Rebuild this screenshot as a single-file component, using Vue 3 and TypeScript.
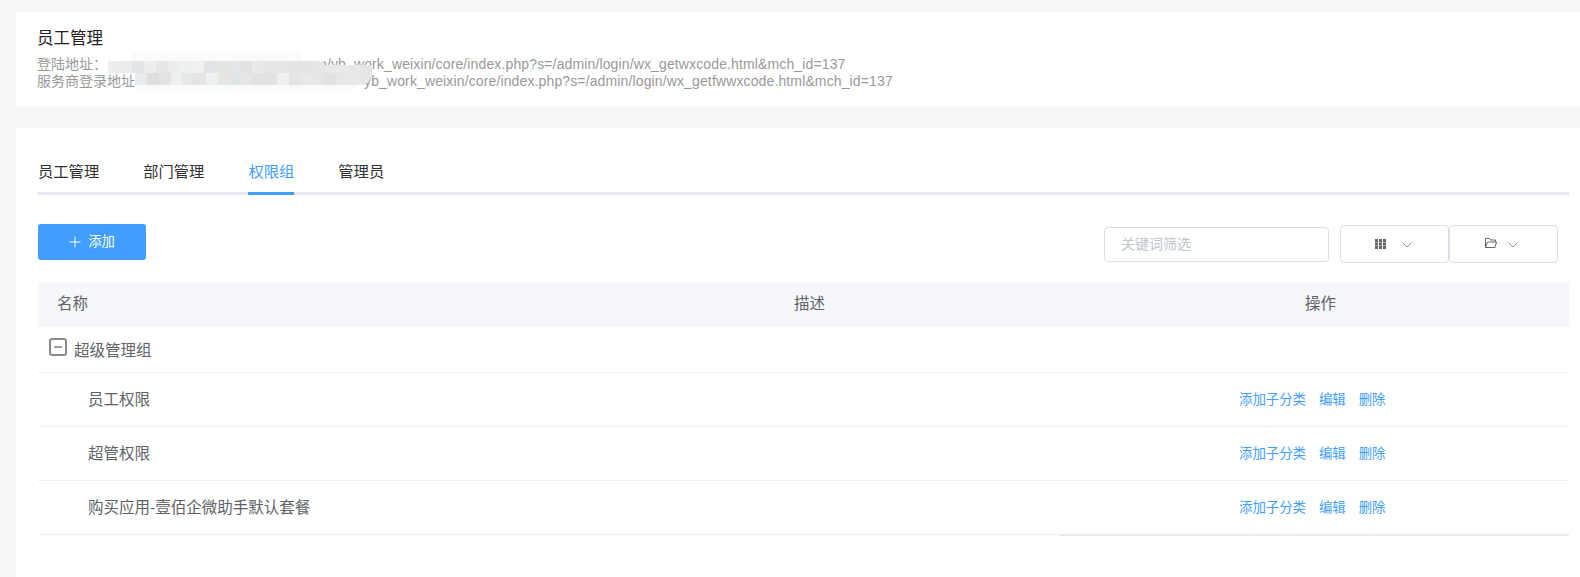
<script setup lang="ts">
const tabs = ['员工管理', '部门管理', '权限组', '管理员']
const rows = ['员工权限', '超管权限', '购买应用-壹佰企微助手默认套餐']
const rowOne = ['#ededed', '#ececec', '#e3e5e5', '#eeedeb', '#e6e6e8', '#ecebed', '#eeeff0', '#f0f0ee', '#e1e3e6', '#e4e4e4', '#e3e5e8', '#e4e2e0', '#e8eaea', '#e8e6e4', '#e6e4e4', '#e4e4e4', '#e2e4e4', '#e6e6e6', '#e8e8e8', '#e9e9eb', '#e8e8e8', '#e6e6e6']
const rowTwo = ['#e8ecee', '#e0dedc', '#e4e4e2', '#ecf0f0', '#e6e6e4', '#e4e4e2', '#ecf0ee', '#e8e4e2', '#e0e6e8', '#e6e6e6', '#e2e2e2', '#e2e2e2', '#f0f0ee', '#e4e4e4', '#e8e8e8', '#e6e6e6', '#e2e2e0', '#e6e6e6', '#e8e8e8', '#e6e6e6']
</script>

<template>
  <div class="page">
    <section class="card head">
      <h1 class="title">员工管理</h1>
      <div class="urls">
        <p class="url"><span>登陆地址：</span><span class="gap1"></span><span class="latin">o/yb_work_weixin/core/index.php?s=/admin/login/wx_getwxcode.html&amp;mch_id=137</span></p>
        <p class="url"><span>服务商登录地址</span><span class="gap2"></span><span class="latin">yb_work_weixin/core/index.php?s=/admin/login/wx_getfwwxcode.html&amp;mch_id=137</span></p>
      </div>
      <div class="mosaic">
        <div class="faint top"></div>
        <div class="m-row one">
          <i v-for="(c, i) in rowOne" :key="i" :class="{ low: i >= 18 }" :style="{ background: c }"></i>
        </div>
        <div class="m-row two">
          <i v-for="(c, i) in rowTwo" :key="i" :style="{ background: c }"></i>
        </div>
        <div class="faint bottom"></div>
      </div>
    </section>

    <section class="card main">
      <nav class="tabs">
        <a v-for="(t, i) in tabs" :key="t" class="tab" :class="{ active: i === 2 }">{{ t }}</a>
      </nav>

      <div class="toolbar">
        <button class="add">
          <svg width="12" height="12" viewBox="0 0 12 12"><path d="M6 0.5V11.5M0.5 6H11.5" stroke="#fff" stroke-width="1" fill="none" /></svg>
          <span class="add-label">添加</span>
        </button>
        <div class="tools">
          <input class="search" placeholder="关键词筛选" />
          <div class="selects">
            <div class="select">
              <svg width="11" height="10" viewBox="0 0 11 10"><path fill="#666" d="M0 0h3v3H0zM4 0h3v3H4zM8 0h3v3H8zM0 3.5h3v3H0zM4 3.5h3v3H4zM8 3.5h3v3H8zM0 7h3v3H0zM4 7h3v3H4zM8 7h3v3H8z" /></svg>
              <svg class="chev" width="10" height="6" viewBox="0 0 10 6"><path d="M0.5 0.5L5 5L9.5 0.5" stroke="#909399" fill="none" /></svg>
            </div>
            <div class="select narrow">
              <svg class="folder" width="12" height="10" viewBox="0 0 12 10"><path d="M0.5 9.5V0.5H4.5L5.5 2H10.5V4M0.5 9.5H10L11.5 4H2.5L0.5 9.5" stroke="#666" fill="none" /></svg>
              <svg class="chev" width="10" height="6" viewBox="0 0 10 6"><path d="M0.5 0.5L5 5L9.5 0.5" stroke="#909399" fill="none" /></svg>
            </div>
          </div>
        </div>
      </div>

      <div class="table">
        <div class="row thead">
          <div class="c-name">名称</div>
          <div class="c-desc">描述</div>
          <div class="c-op">操作</div>
        </div>
        <div class="row group">
          <div class="c-name">
            <span class="toggle"><b></b></span>
            <span>超级管理组</span>
          </div>
        </div>
        <div v-for="r in rows" :key="r" class="row child">
          <div class="c-name">{{ r }}</div>
          <div class="c-desc"></div>
          <div class="links">
            <a>添加子分类</a>
            <a>编辑</a>
            <a>删除</a>
          </div>
        </div>
        <div class="edge"></div>
      </div>
    </section>
  </div>
</template>

<style>
html, body {
  margin: 0;
  background: #f6f7f9;
}
</style>

<style scoped>
.page {
  height: 577px;
  overflow: hidden;
  padding: 12px 0 0 16px;
  box-sizing: border-box;
  font-family: "Liberation Sans", "Noto Sans CJK SC", sans-serif;
  display: flex;
  flex-direction: column;
  gap: 22px;
}
.card {
  background: #fff;
}
.head {
  position: relative;
  height: 94px;
  padding: 16px 21px 0;
  box-sizing: border-box;
}
.title {
  margin: 0;
  font-size: 16.5px;
  font-weight: 400;
  line-height: 20px;
  color: #222;
}
.urls {
  margin-top: 8px;
}
.url {
  margin: 0;
  font-size: 14px;
  line-height: 17px;
  color: #999;
  white-space: nowrap;
}
.latin {
  letter-spacing: 0.13px;
}
.gap1 {
  display: inline-block;
  width: 212px;
}
.gap2 {
  display: inline-block;
  width: 229px;
}
.mosaic {
  position: absolute;
  left: 92px;
  top: 40px;
  width: 264px;
}
.faint {
  height: 9px;
  margin-left: 24px;
  width: 170px;
  background: #fafafa;
}
.faint.bottom {
  height: 6px;
  margin-left: 28px;
  width: 220px;
  border-radius: 0 0 20px 20px;
}
.m-row {
  display: flex;
  height: 12px;
}
.m-row i {
  display: block;
  width: 12px;
  height: 12px;
}
.m-row i.low {
  height: 8px;
  margin-top: 4px;
}
.m-row.two {
  margin-left: 27px;
  width: 237px;
  overflow: hidden;
  border-radius: 0 0 12px 0;
}
.main {
  flex: 1;
  padding: 33px 11px 0 22px;
}
.tabs {
  display: flex;
  gap: 44px;
  border-bottom: 3px solid #e4e7ed;
  height: 31px;
}
.tab {
  position: relative;
  font-size: 15.3px;
  line-height: 22px;
  color: #303133;
}
.tab.active {
  color: #409eff;
}
.tab.active::after {
  content: "";
  position: absolute;
  left: 0;
  right: 0;
  bottom: -3px;
  height: 3px;
  background: #409eff;
}
.toolbar {
  display: flex;
  justify-content: space-between;
  align-items: flex-start;
  margin-top: 29px;
  padding-right: 11px;
}
.add {
  width: 108px;
  height: 36px;
  border: 0;
  border-radius: 3px;
  background: #409eff;
  color: #fff;
  font: inherit;
  font-size: 13.3px;
  display: flex;
  align-items: center;
  justify-content: center;
  gap: 7px;
  padding: 0;
}
.add-label {
  margin-top: -3px;
}
.tools {
  display: flex;
  align-items: center;
  gap: 11px;
  margin-top: 1px;
}
.search {
  width: 225px;
  height: 35px;
  box-sizing: border-box;
  border: 1px solid #dcdfe6;
  border-radius: 4px;
  padding: 0 16px;
  font: inherit;
  font-size: 14px;
  outline: none;
}
.search::placeholder {
  color: #c0c4cc;
}
.selects {
  display: flex;
}
.select {
  width: 109px;
  height: 38px;
  box-sizing: border-box;
  border: 1px solid #dcdfe6;
  border-radius: 4px;
  display: flex;
  align-items: center;
  justify-content: center;
  gap: 16px;
  padding-right: 3px;
}
.select.narrow {
  gap: 11px;
  padding-right: 4px;
}
.chev {
  margin-top: 1px;
}
.folder {
  margin-top: -3px;
}
.table {
  position: relative;
  margin-top: 19px;
  font-size: 15.5px;
  color: #606266;
}
.row {
  display: grid;
  grid-template-columns: 737px 464px 1fr;
  align-items: center;
  border-bottom: 1px solid #ebeef5;
  box-sizing: border-box;
}
.thead {
  height: 44px;
  padding-bottom: 4px;
  background: #f5f7fa;
}
.thead .c-name {
  padding-left: 19px;
}
.thead .c-desc {
  padding-left: 19px;
}
.thead .c-op {
  padding-left: 66px;
}
.group {
  height: 47px;
}
.group .c-name {
  display: flex;
  align-items: center;
  gap: 7px;
  padding-left: 11px;
}
.toggle {
  width: 18px;
  height: 18px;
  box-sizing: border-box;
  border: 2px solid #8a8a8a;
  border-radius: 3px;
  display: flex;
  align-items: center;
  justify-content: center;
  margin-top: -5px;
}
.toggle b {
  width: 8px;
  height: 2px;
  background: #a0a0a0;
}
.child {
  height: 54px;
  padding-bottom: 4px;
}
.child .c-name {
  padding-left: 50px;
}
.links {
  display: flex;
  gap: 13px;
  font-size: 13.4px;
  color: #409eff;
  white-space: nowrap;
}
.edge {
  position: absolute;
  left: 1021px;
  right: 0;
  bottom: -1px;
  height: 2px;
  background: #e8ebef;
}
</style>
